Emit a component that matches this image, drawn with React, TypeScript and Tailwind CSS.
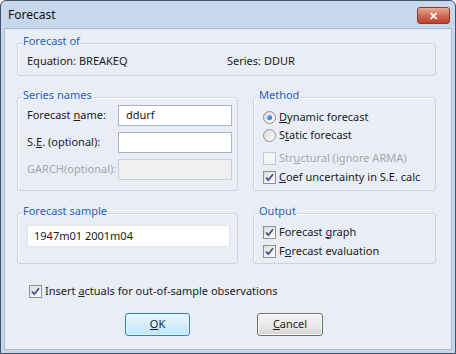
import React from "react";

function Check({ checked = false, disabled = false }: { checked?: boolean; disabled?: boolean }) {
  return (
    <span
      className={`flex h-[13px] w-[13px] shrink-0 items-center justify-center border ${
        disabled ? "border-[#c4c8cc] bg-[#f4f4f4]" : "border-[#8e8f8f] bg-gradient-to-br from-[#dcdcdc] to-[#ffffff]"
      }`}
    >
      {checked && (
        <svg width="11" height="11" viewBox="0 0 11 11">
          <path d="M2 5.5 L4.3 8.2 L9 2.2" fill="none" stroke="#3b4f8f" strokeWidth="1.8" />
        </svg>
      )}
    </span>
  );
}

function Radio({ checked = false }: { checked?: boolean }) {
  return (
    <span className="flex h-[13px] w-[13px] shrink-0 items-center justify-center rounded-full border border-[#8e8f8f] bg-gradient-to-br from-[#d8d8d8] to-[#ffffff]">
      {checked && (
        <span className="h-[5px] w-[5px] rounded-full bg-gradient-to-br from-[#8cc0f0] to-[#1b5ca8]" />
      )}
    </span>
  );
}

function Group({ title, className, children }: { title: string; className: string; children?: React.ReactNode }) {
  return (
    <div className={`relative rounded-[3px] border border-[#cbd3dd] shadow-[inset_1px_1px_0_#ffffff] ${className}`}>
      <span className="absolute -top-[10px] left-[4px] bg-[#e9eef6] px-[1px] leading-[14px] text-[#2a62b8]">
        {title}
      </span>
      {children}
    </div>
  );
}

export default function App() {
  return (
    <div className="h-[354px] w-[456px] font-['Noto_Sans',sans-serif] text-[11px] text-[#1b1b1b]">
      <div className="flex h-full w-full flex-col rounded-t-[6px] border border-[#3f5166] bg-[#c7d8ec]">
        {/* title bar */}
        <div className="flex h-[27px] shrink-0 items-center justify-between pl-[7px] pr-[5px]">
          <span className="text-[12px] text-[#101010]">Forecast</span>
          <div className="mt-[2px] flex h-[17px] w-[33px] items-center justify-center rounded-[3px] border border-[#8a3b2c] bg-gradient-to-b from-[#e6ab9d] via-[#d06a55] to-[#c0402a]">
            <span className="text-[11px] font-bold leading-none text-white">✕</span>
          </div>
        </div>

        {/* client */}
        <div className="mx-[3px] mb-[3px] flex-1 border border-[#a9bbd1] bg-[#e9eef6] pl-[12px] pt-[14px]">
          <Group title="Forecast of" className="flex h-[33px] w-[419px] items-center pt-[3px]">
            <span className="ml-[9px] w-[200px]">Equation: BREAKEQ</span>
            <span>Series: DDUR</span>
          </Group>

          <div className="mt-[21px] flex gap-[15px]">
            <Group title="Series names" className="h-[94px] w-[221px] pl-[9px] pr-[5px] pt-[7px]">
              <div className="flex h-[21px] items-center justify-between">
                <span>
                  Forecast <u>n</u>ame:
                </span>
                <div className="flex h-[21px] w-[114px] items-center border border-[#abb3bd] bg-white pl-[7px]">ddurf</div>
              </div>
              <div className="mt-[6px] flex h-[21px] items-center justify-between">
                <span>
                  S.<u>E</u>. (optional):
                </span>
                <div className="h-[21px] w-[114px] border border-[#abb3bd] bg-white" />
              </div>
              <div className="mt-[6px] flex h-[21px] items-center justify-between">
                <span className="text-[#a6a6a6]">GARCH(optional):</span>
                <div className="h-[21px] w-[114px] border border-[#c9ced4] bg-[#f0f0f0]" />
              </div>
            </Group>

            <Group title="Method" className="h-[94px] w-[183px] pl-[9px] pt-[10px]">
              <div className="flex h-[18px] items-center gap-[3px]">
                <Radio checked />
                <span>
                  <u>D</u>ynamic forecast
                </span>
              </div>
              <div className="flex h-[18px] items-center gap-[3px]">
                <Radio />
                <span>
                  S<u>t</u>atic forecast
                </span>
              </div>
              <div className="mt-[5px] flex h-[18px] items-center gap-[3px]">
                <Check disabled />
                <span className="text-[#a6a6a6]">
                  Str<u>u</u>ctural (ignore ARMA)
                </span>
              </div>
              <div className="mt-[1px] flex h-[18px] items-center gap-[3px]">
                <Check checked />
                <span>
                  <u>C</u>oef uncertainty in S.E. calc
                </span>
              </div>
            </Group>
          </div>

          <div className="mt-[22px] flex gap-[15px]">
            <Group title="Forecast sample" className="h-[51px] w-[221px] pl-[9px] pt-[11px]">
              <div className="flex h-[22px] w-[203px] items-center border border-[#e2e6eb] bg-white pl-[6px]">
                1947m01 2001m04
              </div>
            </Group>
            <Group title="Output" className="h-[51px] w-[183px] pl-[9px] pt-[9px]">
              <div className="flex h-[18px] items-center gap-[3px]">
                <Check checked />
                <span>
                  Forecast <u>g</u>raph
                </span>
              </div>
              <div className="mt-[1px] flex h-[18px] items-center gap-[3px]">
                <Check checked />
                <span>
                  F<u>o</u>recast evaluation
                </span>
              </div>
            </Group>
          </div>

          <div className="ml-[12px] mt-[20px] flex h-[15px] items-center gap-[3px]">
            <Check checked />
            <span>
              Insert <u>a</u>ctuals for out-of-sample observations
            </span>
          </div>

          <div className="ml-[108px] mt-[14px] flex gap-[67px]">
            <div className="flex h-[23px] w-[65px] items-center justify-center rounded-[3px] border border-[#3c7fb1] bg-gradient-to-b from-[#eaf6fd] to-[#bee6fd] shadow-[inset_0_0_0_1px_#e0f2fd]">
              <span>
                <u>O</u>K
              </span>
            </div>
            <div className="flex h-[23px] w-[66px] items-center justify-center rounded-[3px] border border-[#707070] bg-gradient-to-b from-[#f2f2f2] via-[#ebebeb] to-[#d4d4d4] shadow-[inset_0_0_0_1px_#fbfbfb]">
              <span>
                <u>C</u>ancel
              </span>
            </div>
          </div>
        </div>
      </div>
    </div>
  );
}
